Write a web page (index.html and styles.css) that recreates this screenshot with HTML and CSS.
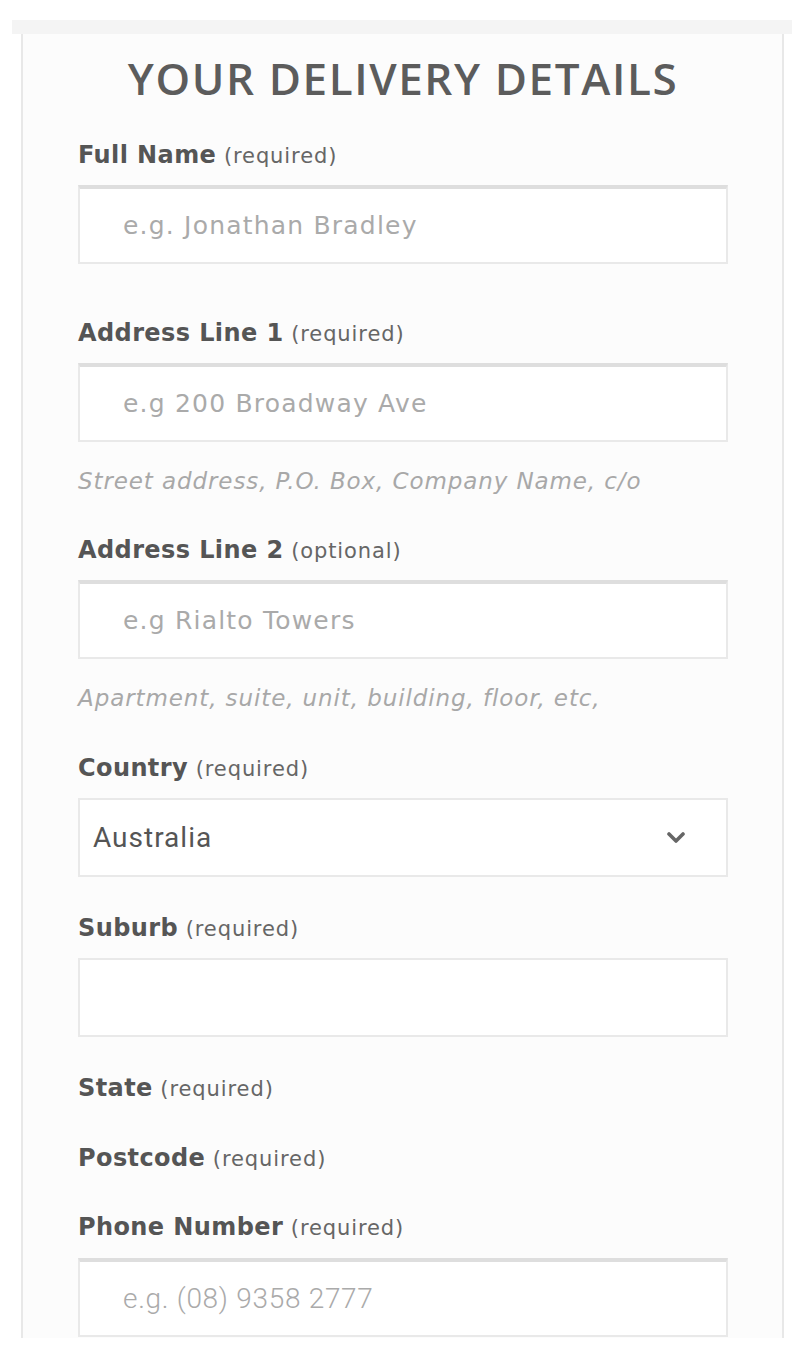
FILE: index.html
```html
<!DOCTYPE html>
<html lang="en">
<head>
<meta charset="utf-8">
<title>Your Delivery Details</title>
<link rel="stylesheet" href="styles.css">
</head>
<body>
<div class="strip"></div>
<main class="panel">
  <h1 class="title">YOUR DELIVERY DETAILS</h1>

  <div class="field f-name">
    <label class="label"><b>Full Name</b> <span class="req">(required)</span></label>
    <div class="input shadow"><span class="ph">e.g. Jonathan Bradley</span></div>
  </div>

  <div class="field f-addr1">
    <label class="label"><b>Address Line 1</b> <span class="req">(required)</span></label>
    <div class="input shadow"><span class="ph">e.g 200 Broadway Ave</span></div>
    <p class="hint">Street address, P.O. Box, Company Name, c/o</p>
  </div>

  <div class="field f-addr2">
    <label class="label"><b>Address Line 2</b> <span class="req">(optional)</span></label>
    <div class="input shadow"><span class="ph">e.g Rialto Towers</span></div>
    <p class="hint">Apartment, suite, unit, building, floor, etc,</p>
  </div>

  <div class="field f-country">
    <label class="label"><b>Country</b> <span class="req">(required)</span></label>
    <div class="input select">
      <span class="value">Australia</span>
      <svg class="chev" width="20" height="12" viewBox="0 0 20 12"><path d="M3 2 L10 9 L17 2" fill="none" stroke="#666" stroke-width="3.6" stroke-linecap="round" stroke-linejoin="round"/></svg>
    </div>
  </div>

  <div class="field f-suburb">
    <label class="label"><b>Suburb</b> <span class="req">(required)</span></label>
    <div class="input"></div>
  </div>

  <div class="field f-state">
    <label class="label"><b>State</b> <span class="req">(required)</span></label>
  </div>

  <div class="field f-post">
    <label class="label"><b>Postcode</b> <span class="req">(required)</span></label>
  </div>

  <div class="field f-phone">
    <label class="label"><b>Phone Number</b> <span class="req">(required)</span></label>
    <div class="input shadow"><span class="ph phone">e.g. (08) 9358 2777</span></div>
  </div>
</main>
</body>
</html>
```

FILE: styles.css
```css
html, body {
  margin: 0;
  padding: 0;
  background: #ffffff;
}
body {
  font-family: "DejaVu Sans", "Open Sans", sans-serif;
  color: #555;
}
.strip {
  margin: 20px 8px 0 12px;
  height: 14px;
  background: #f4f4f4;
}
.panel {
  margin: 0 16px 0 21px;
  border-left: 2px solid #e8e8e8;
  border-right: 2px solid #e8e8e8;
  background: #fcfcfc;
  padding: 0 54px 3px 55px;
  height: 1304px;
  box-sizing: border-box;
}
.title {
  margin: 0;
  padding-top: 17px;
  height: 106px;
  box-sizing: border-box;
  text-align: center;
  font-family: "Open Sans", "Liberation Sans", sans-serif;
  font-size: 44px;
  line-height: 54px;
  font-weight: 600;
  color: #5c5c5c;
  letter-spacing: 1.6px;
}
.field {
  display: flex;
  flex-direction: column;
}
.label {
  display: block;
  height: 30px;
  line-height: 30px;
  font-size: 24px;
  color: #555;
  white-space: nowrap;
}
.label b {
  font-weight: 700;
  letter-spacing: 0.4px;
}
.req {
  font-size: 21px;
  color: #666;
  letter-spacing: 0.9px;
}
.input {
  margin-top: 15px;
  height: 79px;
  box-sizing: border-box;
  border: 2px solid #e9e9e9;
  background: #ffffff;
  display: flex;
  align-items: center;
  padding-left: 43px;
}
.shadow {
  border-top: 4px solid #dedede;
}
.ph {
  font-size: 25px;
  color: #aaaaaa;
  letter-spacing: 1.2px;
}
.ph.phone {
  font-family: "Roboto", "Liberation Sans", sans-serif;
  font-weight: 300;
  font-size: 28px;
  letter-spacing: 0.7px;
}
.select {
  padding-left: 13px;
  padding-right: 40px;
  justify-content: space-between;
}
.value {
  font-family: "Roboto", "Liberation Sans", sans-serif;
  font-size: 28px;
  letter-spacing: 1px;
  color: #555;
}
.chev {
  display: block;
}
.hint {
  margin: 24px 0 0;
  height: 30px;
  line-height: 30px;
  font-size: 23px;
  font-style: italic;
  color: #a8a8a8;
  letter-spacing: 0.9px;
  white-space: nowrap;
}
.f-name { margin-bottom: 54px; }
.f-addr1 { margin-bottom: 39px; }
.f-addr2 { margin-bottom: 40px; }
.f-country { margin-bottom: 36px; }
.f-suburb { margin-bottom: 36px; }
.f-state { margin-bottom: 40px; }
.f-post { margin-bottom: 39px; }
.f-phone .input { margin-top: 16px; }
```
